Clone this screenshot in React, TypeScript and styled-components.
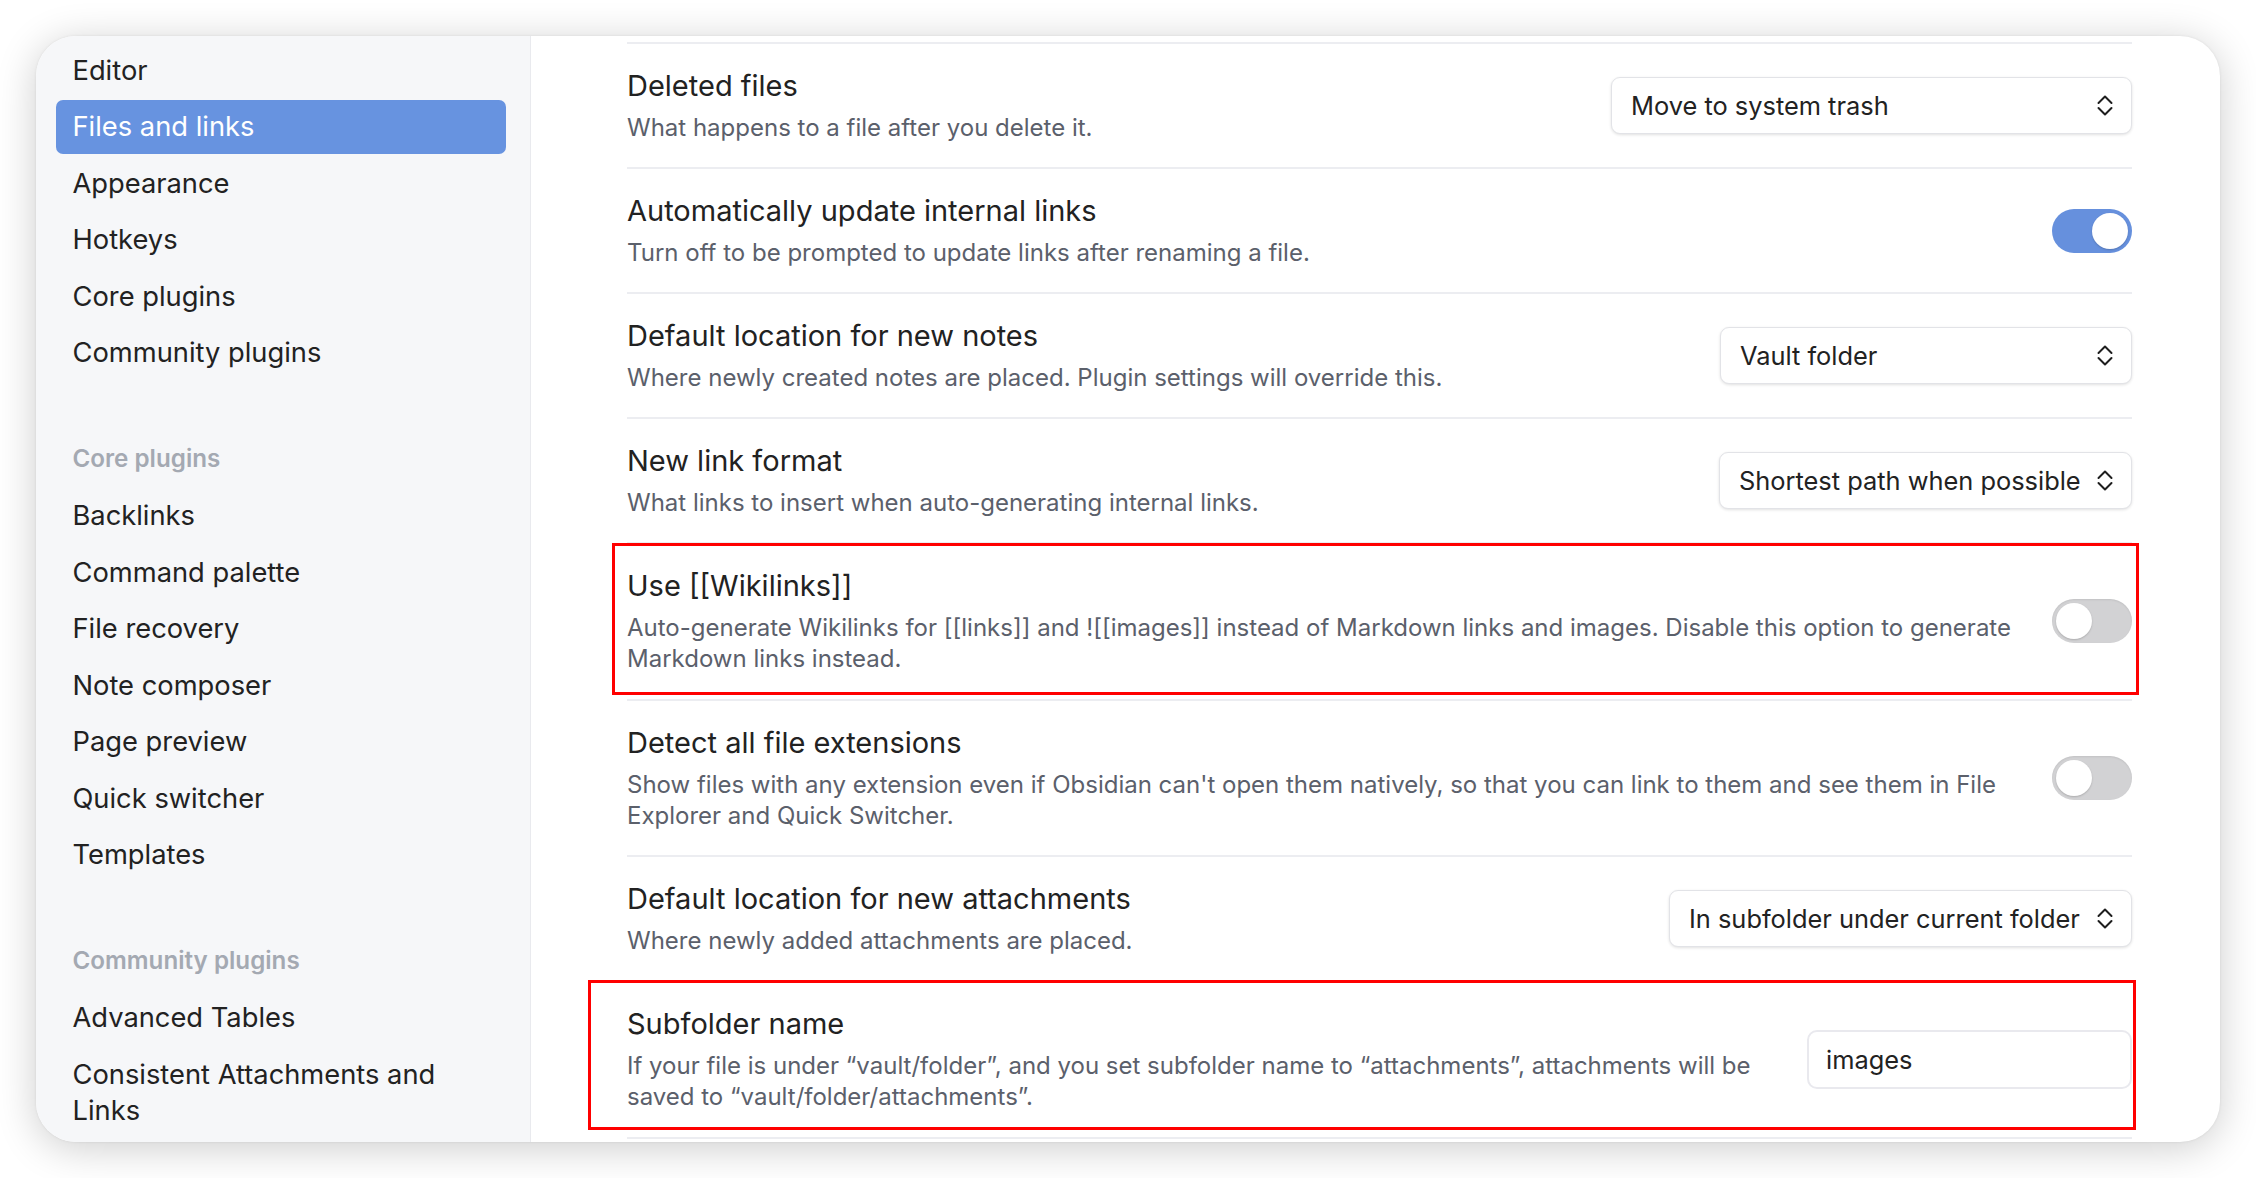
import React from "react";
import styled, { createGlobalStyle } from "styled-components";

const GlobalStyle = createGlobalStyle`
  html, body { margin: 0; padding: 0; background: #ffffff; }
  body { font-family: Inter, "Liberation Sans", sans-serif; -webkit-font-smoothing: antialiased; }
  * { box-sizing: border-box; }
`;

const Stage = styled.div`
  width: 2256px;
  height: 1178px;
  padding: 36px;
  background: #ffffff;
  overflow: hidden;
`;

const Window = styled.div`
  width: 2184px;
  height: 1106px;
  display: flex;
  border-radius: 40px;
  overflow: hidden;
  background: #ffffff;
  box-shadow: 0 6px 40px rgba(0, 0, 0, 0.2), 0 0 3px rgba(0, 0, 0, 0.08);
`;

const Sidebar = styled.nav`
  flex: 0 0 495px;
  background: #f6f7f9;
  border-right: 1px solid #e9eaee;
  padding: 7.5px 24px 0 20px;
  display: flex;
  flex-direction: column;
  gap: 2.5px;
`;

const NavItem = styled.div<{ $active?: boolean }>`
  padding: 9px 50px 9px 16.5px;
  font-size: 27.3px;
  line-height: 36px;
  border-radius: 7px;
  color: ${(p) => (p.$active ? "#ffffff" : "#222222")};
  background: ${(p) => (p.$active ? "#6793e0" : "transparent")};
`;

const NavHeading = styled.div`
  margin: 61.5px 0 12.5px;
  padding: 0 16.5px;
  font-size: 24.2px;
  font-weight: 600;
  line-height: 30px;
  color: #a4a9b2;
`;

const Content = styled.main`
  flex: 1;
  padding: 6px 88px 0 96px;
  overflow: hidden;
`;

const List = styled.div`
  border-bottom: 2px solid #ecedf1;
`;

const Row = styled.div<{ $tall?: boolean }>`
  position: relative;
  display: flex;
  align-items: center;
  gap: 24px;
  padding: ${(p) => (p.$tall ? "24.25px 0" : "24px 0")};
  border-top: 2px solid #ecedf1;
`;

const Info = styled.div`
  flex: 1;
  min-width: 0;
`;

const Name = styled.div`
  font-size: 29px;
  line-height: 36px;
  color: #222222;
`;

const Desc = styled.div`
  padding-top: 8px;
  font-size: 24px;
  line-height: 31px;
  color: #5b606b;
  white-space: nowrap;
`;

const Select = styled.div<{ $width: number }>`
  flex: 0 0 auto;
  width: ${(p) => p.$width}px;
  height: 57px;
  display: flex;
  align-items: center;
  justify-content: space-between;
  gap: 14px;
  padding: 0 18px 0 19px;
  background: #ffffff;
  border: 1px solid #e2e3e7;
  border-radius: 9px;
  box-shadow: 0 1px 3px rgba(0, 0, 0, 0.12);
  font-size: 25.4px;
  color: #222222;
  white-space: nowrap;
`;

const Toggle = styled.div<{ $on?: boolean }>`
  flex: 0 0 auto;
  width: 80px;
  height: 44px;
  border-radius: 22px;
  padding: 4px;
  display: flex;
  justify-content: ${(p) => (p.$on ? "flex-end" : "flex-start")};
  background: ${(p) => (p.$on ? "#6690dd" : "#d2d2d4")};
  box-shadow: ${(p) => (p.$on ? "none" : "inset 0 1px 2px rgba(0, 0, 0, 0.08)")};
`;

const Knob = styled.div`
  width: 36px;
  height: 36px;
  border-radius: 50%;
  background: #ffffff;
  box-shadow: 0 1px 2px rgba(0, 0, 0, 0.18);
`;

const TextInput = styled.div`
  flex: 0 0 auto;
  width: 325px;
  height: 59px;
  display: flex;
  align-items: center;
  padding: 0 17px;
  border: 2px solid #e9e9ee;
  border-radius: 10px;
  font-size: 25.4px;
  color: #222222;
`;

const Highlight = styled.div<{ $l: number; $r: number; $t: number; $b: number }>`
  position: absolute;
  left: ${(p) => p.$l}px;
  right: ${(p) => p.$r}px;
  top: ${(p) => p.$t}px;
  bottom: ${(p) => p.$b}px;
  border: 3px solid #ff0000;
  pointer-events: none;
`;

const UpDown = () => (
  <svg width="16" height="21" viewBox="0 0 16 21" fill="none">
    <path
      d="M1.5 8 L8 1.5 L14.5 8 M1.5 13 L8 19.5 L14.5 13"
      stroke="#1e1e1e"
      strokeWidth="2"
      strokeLinecap="round"
      strokeLinejoin="round"
    />
  </svg>
);

const Dropdown = ({ value, width }: { value: string; width: number }) => (
  <Select $width={width}>
    <span>{value}</span>
    <UpDown />
  </Select>
);

export default function App() {
  return (
    <>
      <GlobalStyle />
      <Stage>
        <Window>
          <Sidebar>
            <NavItem>Editor</NavItem>
            <NavItem $active>Files and links</NavItem>
            <NavItem>Appearance</NavItem>
            <NavItem>Hotkeys</NavItem>
            <NavItem>Core plugins</NavItem>
            <NavItem>Community plugins</NavItem>
            <NavHeading>Core plugins</NavHeading>
            <NavItem>Backlinks</NavItem>
            <NavItem>Command palette</NavItem>
            <NavItem>File recovery</NavItem>
            <NavItem>Note composer</NavItem>
            <NavItem>Page preview</NavItem>
            <NavItem>Quick switcher</NavItem>
            <NavItem>Templates</NavItem>
            <NavHeading>Community plugins</NavHeading>
            <NavItem>Advanced Tables</NavItem>
            <NavItem>Consistent Attachments and Links</NavItem>
          </Sidebar>
          <Content>
            <List>
              <Row>
                <Info>
                  <Name>Deleted files</Name>
                  <Desc>What happens to a file after you delete it.</Desc>
                </Info>
                <Dropdown value="Move to system trash" width={521} />
              </Row>
              <Row>
                <Info>
                  <Name>Automatically update internal links</Name>
                  <Desc>Turn off to be prompted to update links after renaming a file.</Desc>
                </Info>
                <Toggle $on>
                  <Knob />
                </Toggle>
              </Row>
              <Row>
                <Info>
                  <Name>Default location for new notes</Name>
                  <Desc>Where newly created notes are placed. Plugin settings will override this.</Desc>
                </Info>
                <Dropdown value="Vault folder" width={412} />
              </Row>
              <Row>
                <Info>
                  <Name>New link format</Name>
                  <Desc>What links to insert when auto-generating internal links.</Desc>
                </Info>
                <Dropdown value="Shortest path when possible" width={413} />
              </Row>
              <Row $tall>
                <Info>
                  <Name>Use [[Wikilinks]]</Name>
                  <Desc>
                    Auto-generate Wikilinks for [[links]] and ![[images]] instead of Markdown links and images. Disable this option to generate
                    <br />
                    Markdown links instead.
                  </Desc>
                </Info>
                <Toggle>
                  <Knob />
                </Toggle>
                <Highlight $l={-15} $r={-7} $t={-1} $b={3.5} />
              </Row>
              <Row $tall>
                <Info>
                  <Name>Detect all file extensions</Name>
                  <Desc>
                    Show files with any extension even if Obsidian can't open them natively, so that you can link to them and see them in File
                    <br />
                    Explorer and Quick Switcher.
                  </Desc>
                </Info>
                <Toggle>
                  <Knob />
                </Toggle>
              </Row>
              <Row>
                <Info>
                  <Name>Default location for new attachments</Name>
                  <Desc>Where newly added attachments are placed.</Desc>
                </Info>
                <Dropdown value="In subfolder under current folder" width={463} />
              </Row>
              <Row $tall>
                <Info>
                  <Name>Subfolder name</Name>
                  <Desc>
                    If your file is under “vault/folder”, and you set subfolder name to “attachments”, attachments will be
                    <br />
                    saved to “vault/folder/attachments”.
                  </Desc>
                </Info>
                <TextInput>images</TextInput>
                <Highlight $l={-39} $r={-4} $t={-2} $b={6.5} />
              </Row>
            </List>
          </Content>
        </Window>
      </Stage>
    </>
  );
}
